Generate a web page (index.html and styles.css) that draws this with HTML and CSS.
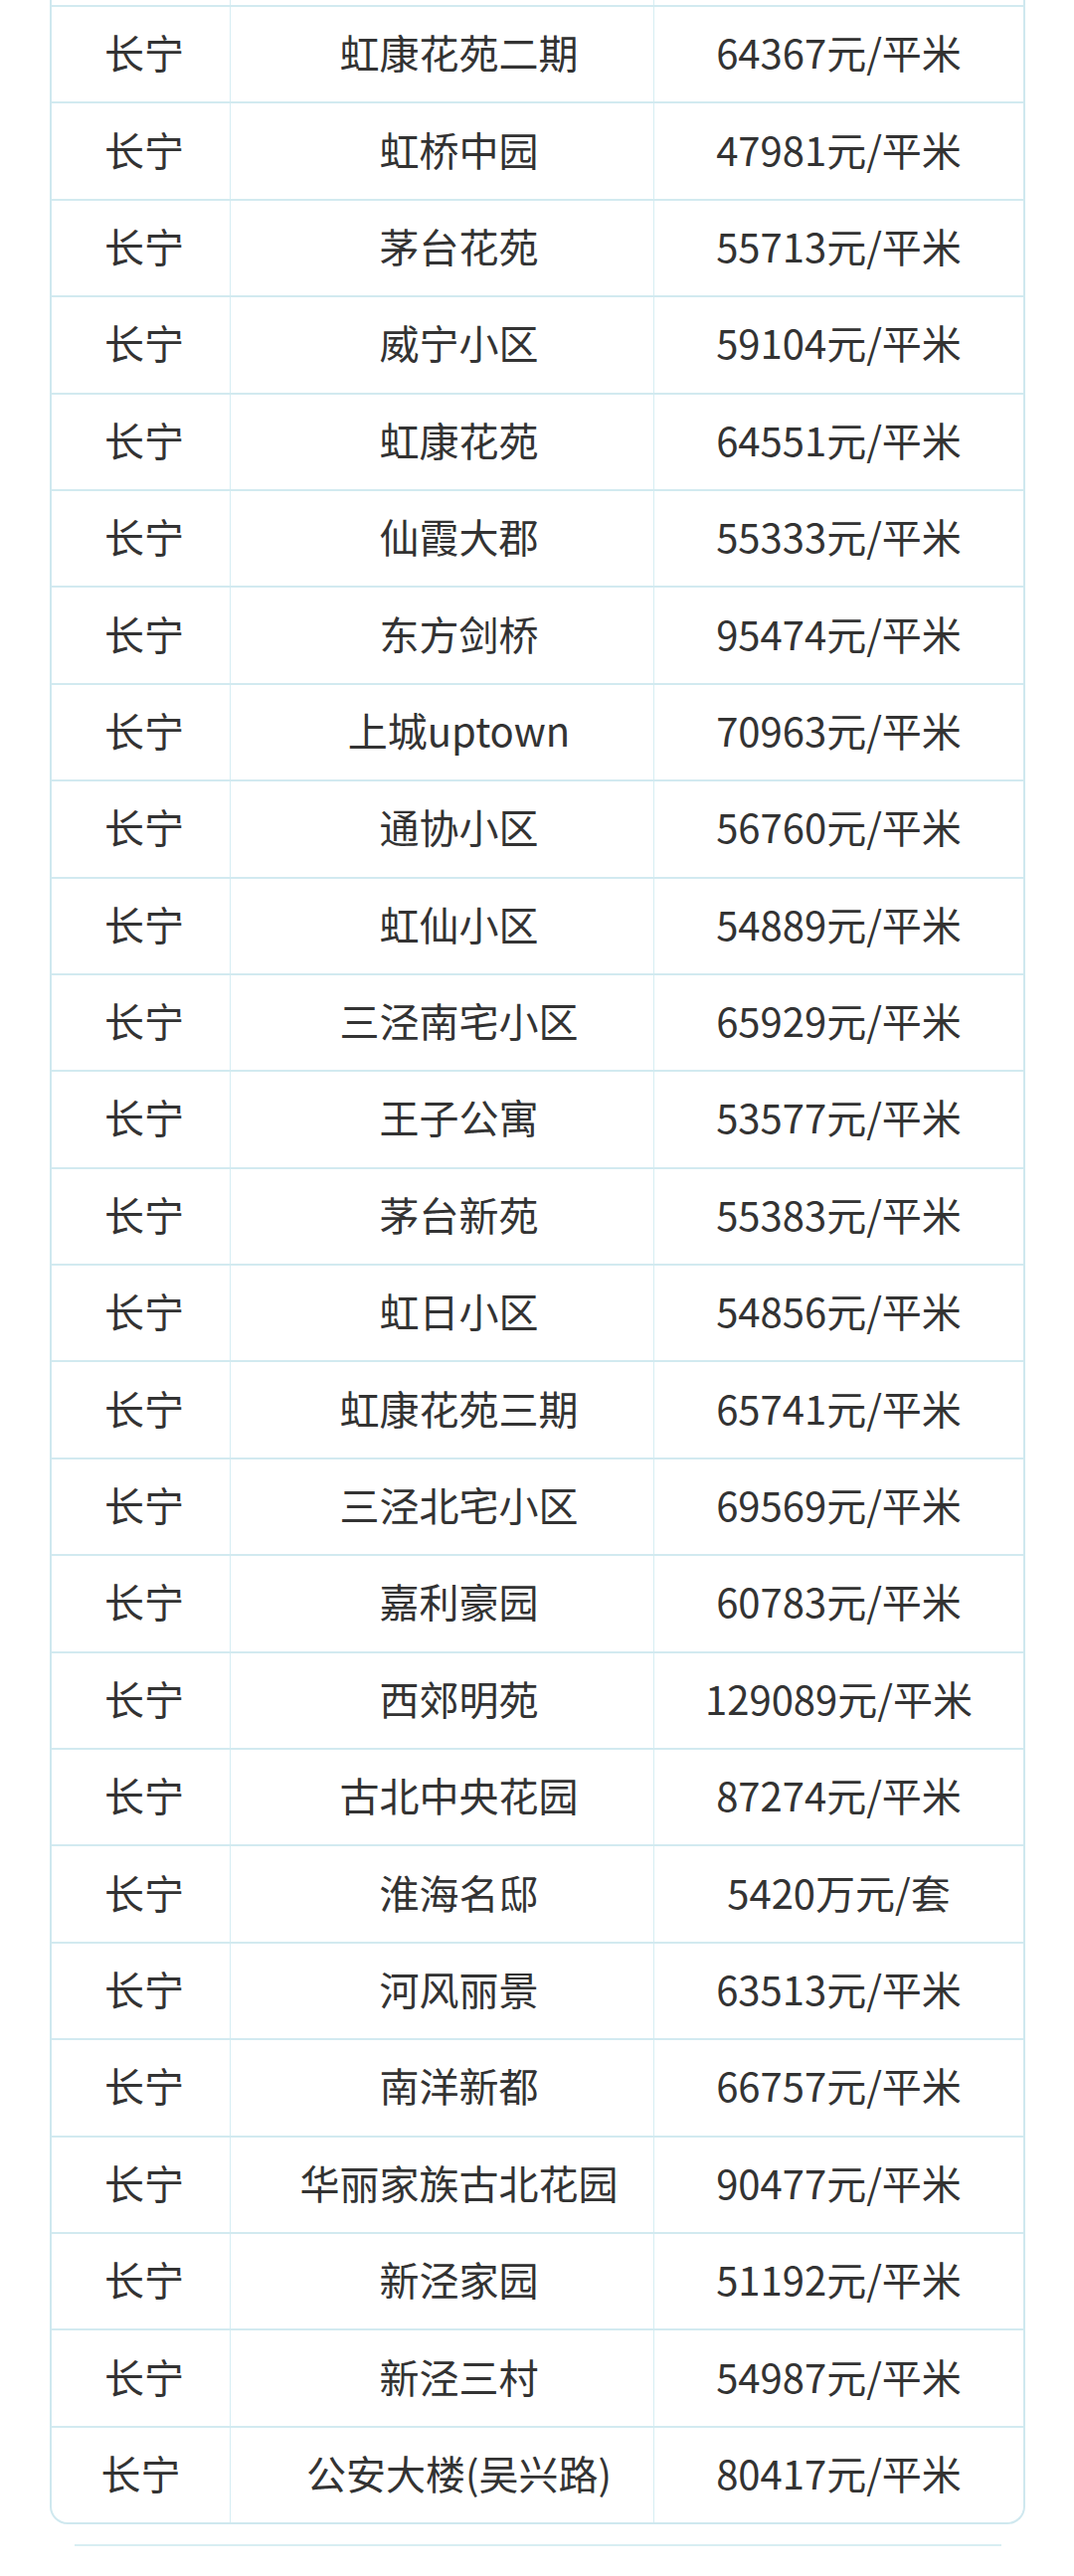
FILE: index.html
```html
<!DOCTYPE html>
<html lang="zh-CN">
<head>
<meta charset="utf-8">
<title>长宁小区房价</title>
<link rel="stylesheet" href="styles.css">
</head>
<body>
<div class="page">
  <div class="table">
    <div class="row stub"><div class="cell c1"></div><div class="cell c2"></div><div class="cell c3"></div></div>
    <div class="row"><div class="cell c1">长宁</div><div class="cell c2">虹康花苑二期</div><div class="cell c3">64367元/平米</div></div>
    <div class="row"><div class="cell c1">长宁</div><div class="cell c2">虹桥中园</div><div class="cell c3">47981元/平米</div></div>
    <div class="row"><div class="cell c1">长宁</div><div class="cell c2">茅台花苑</div><div class="cell c3">55713元/平米</div></div>
    <div class="row"><div class="cell c1">长宁</div><div class="cell c2">威宁小区</div><div class="cell c3">59104元/平米</div></div>
    <div class="row"><div class="cell c1">长宁</div><div class="cell c2">虹康花苑</div><div class="cell c3">64551元/平米</div></div>
    <div class="row"><div class="cell c1">长宁</div><div class="cell c2">仙霞大郡</div><div class="cell c3">55333元/平米</div></div>
    <div class="row"><div class="cell c1">长宁</div><div class="cell c2">东方剑桥</div><div class="cell c3">95474元/平米</div></div>
    <div class="row"><div class="cell c1">长宁</div><div class="cell c2">上城uptown</div><div class="cell c3">70963元/平米</div></div>
    <div class="row"><div class="cell c1">长宁</div><div class="cell c2">通协小区</div><div class="cell c3">56760元/平米</div></div>
    <div class="row"><div class="cell c1">长宁</div><div class="cell c2">虹仙小区</div><div class="cell c3">54889元/平米</div></div>
    <div class="row"><div class="cell c1">长宁</div><div class="cell c2">三泾南宅小区</div><div class="cell c3">65929元/平米</div></div>
    <div class="row"><div class="cell c1">长宁</div><div class="cell c2">王子公寓</div><div class="cell c3">53577元/平米</div></div>
    <div class="row"><div class="cell c1">长宁</div><div class="cell c2">茅台新苑</div><div class="cell c3">55383元/平米</div></div>
    <div class="row"><div class="cell c1">长宁</div><div class="cell c2">虹日小区</div><div class="cell c3">54856元/平米</div></div>
    <div class="row"><div class="cell c1">长宁</div><div class="cell c2">虹康花苑三期</div><div class="cell c3">65741元/平米</div></div>
    <div class="row"><div class="cell c1">长宁</div><div class="cell c2">三泾北宅小区</div><div class="cell c3">69569元/平米</div></div>
    <div class="row"><div class="cell c1">长宁</div><div class="cell c2">嘉利豪园</div><div class="cell c3">60783元/平米</div></div>
    <div class="row"><div class="cell c1">长宁</div><div class="cell c2">西郊明苑</div><div class="cell c3">129089元/平米</div></div>
    <div class="row"><div class="cell c1">长宁</div><div class="cell c2">古北中央花园</div><div class="cell c3">87274元/平米</div></div>
    <div class="row"><div class="cell c1">长宁</div><div class="cell c2">淮海名邸</div><div class="cell c3">5420万元/套</div></div>
    <div class="row"><div class="cell c1">长宁</div><div class="cell c2">河风丽景</div><div class="cell c3">63513元/平米</div></div>
    <div class="row"><div class="cell c1">长宁</div><div class="cell c2">南洋新都</div><div class="cell c3">66757元/平米</div></div>
    <div class="row"><div class="cell c1">长宁</div><div class="cell c2">华丽家族古北花园</div><div class="cell c3">90477元/平米</div></div>
    <div class="row"><div class="cell c1">长宁</div><div class="cell c2">新泾家园</div><div class="cell c3">51192元/平米</div></div>
    <div class="row"><div class="cell c1">长宁</div><div class="cell c2">新泾三村</div><div class="cell c3">54987元/平米</div></div>
    <div class="row last"><div class="cell c1 c1-last">长宁</div><div class="cell c2">公安大楼(吴兴路)</div><div class="cell c3">80417元/平米</div></div>
  </div>
  <div class="rule"></div>
</div>
</body>
</html>
```
FILE: styles.css
```css
html, body {
  margin: 0;
  padding: 0;
  background: #ffffff;
}

body {
  font-family: "Noto Sans CJK SC", "Noto Sans", sans-serif;
  color: #333333;
}

.page {
  width: 1080px;
  height: 2591px;
  overflow: hidden;
}

.table {
  margin-left: 50px;
  width: 981px;
  box-sizing: border-box;
  border: 2px solid #cfe8ef;
  border-top: none;
  border-radius: 0 0 18px 18px;
  overflow: hidden;
}

.row {
  display: grid;
  grid-template-columns: 180px 426px 1fr;
  height: 97.4px;
  box-sizing: border-box;
  border-bottom: 2px solid #d2eaf0;
}

.row.stub {
  height: 7px;
}

.row.last {
  height: 95.4px;
  border-bottom: none;
}

.cell {
  display: flex;
  align-items: center;
  justify-content: center;
  font-size: 40px;
  line-height: 1;
  white-space: nowrap;
  box-sizing: border-box;
  padding-bottom: 5px;
}

.row.stub .cell {
  padding-bottom: 0;
}

.c1 {
  border-right: 1px solid #d6edf3;
  padding-left: 7px;
}

.c1-last {
  padding-left: 0;
}

.c2 {
  border-right: 1px solid #d6edf3;
  padding-left: 34px;
}

.rule {
  margin-top: 20px;
  margin-left: 75px;
  width: 932px;
  height: 2px;
  background: #d8eef3;
}
```
